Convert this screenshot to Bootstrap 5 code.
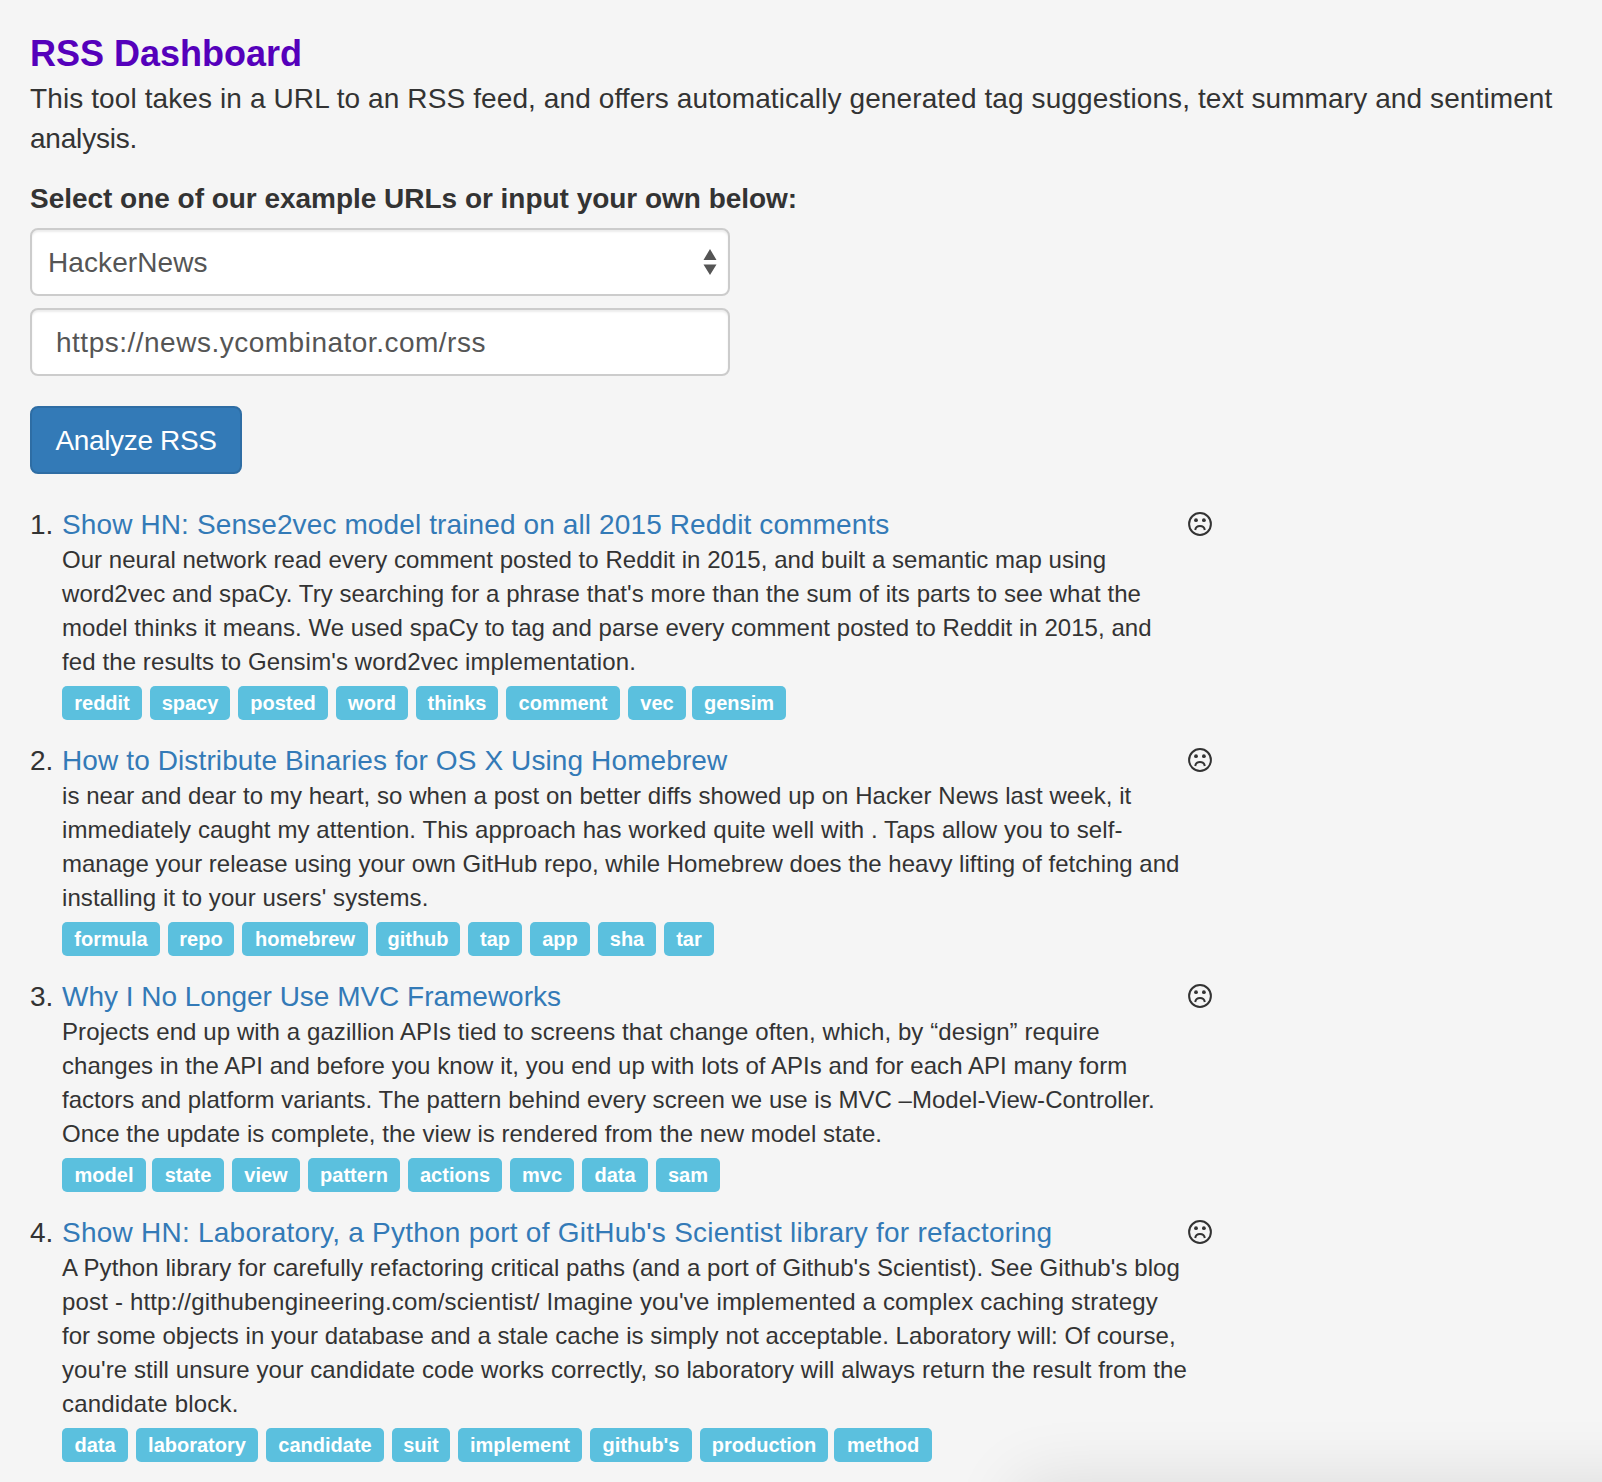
<!DOCTYPE html>
<html lang="en">
<head>
<meta charset="utf-8">
<meta name="viewport" content="width=device-width, initial-scale=1">
<title>RSS Dashboard</title>
<link href="https://cdn.jsdelivr.net/npm/bootstrap@5.3.0/dist/css/bootstrap.min.css" rel="stylesheet">
<style>
  body { background: #f5f5f5; color: #333; font: 28px/40px "Liberation Sans", Arial, sans-serif; min-height: 1482px; }
  .page { padding: 34px 30px 0; }
  .brand-title { color: #50b; font-size: 36px; line-height: 40px; font-weight: 700; margin: 0 0 5px; }
  .ln { display: block; white-space: nowrap; width: max-content; }
  .intro { letter-spacing: .107px; margin-bottom: 20px; }
  .intro .ln + .ln { letter-spacing: -.2px; }
  .form-area { width: 700px; }
  .form-area .field-label { display: block; letter-spacing: -.025px; margin-bottom: 9px; }
  .form-area .form-select, .form-area .form-control { height: 68px; border: 2px solid #ccc; border-radius: 8px; font-size: 28px; line-height: 40px; color: #555; box-shadow: inset 0 2px 2px rgba(0,0,0,.075); background-color: #fff; }
  .form-area .form-select { padding: 13px 16px 11px; letter-spacing: .1px; background-image: url("data:image/svg+xml,%3Csvg xmlns='http://www.w3.org/2000/svg' viewBox='0 0 14 26'%3E%3Cpath fill='%23555' d='M7 0l6.500 11H.5zM7 26l6.500-10.500H.5z'/%3E%3C/svg%3E"); background-size: 14px 26px; background-position: right 11px center; }
  .form-area .form-control { padding: 13px 24px 11px; margin-top: 12px; letter-spacing: .5px; }
  .btn-analyze { --bs-btn-bg: #337ab7; --bs-btn-color: #fff; --bs-btn-border-color: #2e6da4; height: 68px; width: 212px; padding: 2px 0 0; margin-top: 30px; border-width: 2px; border-radius: 8px; font-size: 28px; letter-spacing: -.35px; }
  .feed { width: 1182px; margin: 30px 0 0; }
  .feed-item { line-height: 42px; }
  .feed-item + .feed-item { margin-top: 20px; }
  .feed-num { width: 32px; }
  .feed-link { color: #337ab7; text-decoration: none; height: 39px; }
  .feed-text { font-size: 24px; line-height: 34px; margin-bottom: 7px; }
  .tag { background: #5bc0de; color: #fff; font-size: 20px; line-height: 20px; font-weight: 700; height: 34px; padding: 7px 0; border-radius: 5px; text-align: center; }
  .tag-tight { margin-left: -2px; }
  .mood { width: 24px; height: 24px; margin-top: 8px; }
  .shade-clip { width: 702px; height: 100px; }
  .shade-box { margin: 100px 0 0 118px; width: 900px; height: 300px; box-shadow: 0 0 65px rgba(0,0,0,.11); }
</style>
<script src="https://cdn.jsdelivr.net/npm/bootstrap@5.3.0/dist/js/bootstrap.bundle.min.js"></script>
</head>
<body class="position-relative">
<svg class="d-none"><symbol id="sad" viewBox="0 0 24 24"><circle cx="12" cy="12" r="10.900" fill="none" stroke="#333" stroke-width="2"/><circle cx="8" cy="8.200" r="1.900" fill="#333"/><circle cx="15.900" cy="8.200" r="1.900" fill="#333"/><path d="M7.200 18C8 12.800 16 12.800 16.800 18" fill="none" stroke="#333" stroke-width="2"/></symbol></svg>
<main class="page">
  <h1 class="brand-title">RSS Dashboard</h1>
  <p class="intro"><span class="ln">This tool takes in a URL to an RSS feed, and offers automatically generated tag suggestions, text summary and sentiment</span><span class="ln">analysis.</span></p>
  <form class="form-area">
    <label class="field-label fw-bold text-nowrap" for="source">Select one of our example URLs or input your own below:</label>
    <select class="form-select" id="source"><option>HackerNews</option></select>
    <input class="form-control" value="https://news.ycombinator.com/rss">
    <button type="button" class="btn btn-analyze d-block">Analyze RSS</button>
  </form>
  <ol class="feed list-unstyled" id="feed"></ol>
</main>
<div class="shade-clip position-absolute bottom-0 end-0 overflow-hidden pe-none"><div class="shade-box"></div></div>
<script>
// Each line is [text, tracking in px]; each tag is [text, width in px, tight gap]
const items = [
  { title: ["Show HN: Sense2vec model trained on all 2015 Reddit comments", .12],
    lines: [["Our neural network read every comment posted to Reddit in 2015, and built a semantic map using", .038],
      ["word2vec and spaCy. Try searching for a phrase that's more than the sum of its parts to see what the", .077],
      ["model thinks it means. We used spaCy to tag and parse every comment posted to Reddit in 2015, and", .042],
      ["fed the results to Gensim's word2vec implementation.", .098]],
    tags: [["reddit", 80], ["spacy", 80], ["posted", 90], ["word", 72], ["thinks", 82], ["comment", 114], ["vec", 58], ["gensim", 94, 1]] },
  { title: ["How to Distribute Binaries for OS X Using Homebrew", .112],
    lines: [["is near and dear to my heart, so when a post on better diffs showed up on Hacker News last week, it", .052],
      ["immediately caught my attention. This approach has worked quite well with . Taps allow you to self-", .103],
      ["manage your release using your own GitHub repo, while Homebrew does the heavy lifting of fetching and", .008],
      ["installing it to your users' systems.", .083]],
    tags: [["formula", 98], ["repo", 66], ["homebrew", 126], ["github", 84], ["tap", 54], ["app", 60], ["sha", 58], ["tar", 50]] },
  { title: ["Why I No Longer Use MVC Frameworks", -.015],
    lines: [["Projects end up with a gazillion APIs tied to screens that change often, which, by “design” require", .093],
      ["changes in the API and before you know it, you end up with lots of APIs and for each API many form", .047],
      ["factors and platform variants. The pattern behind every screen we use is MVC –Model-View-Controller.", .025],
      ["Once the update is complete, the view is rendered from the new model state.", .048]],
    tags: [["model", 84], ["state", 72, 1], ["view", 68], ["pattern", 92], ["actions", 94], ["mvc", 64], ["data", 66], ["sam", 64]] },
  { title: ["Show HN: Laboratory, a Python port of GitHub's Scientist library for refactoring", .239],
    lines: [["A Python library for carefully refactoring critical paths (and a port of Github's Scientist). See Github's blog", .074],
      ["post - http://githubengineering.com/scientist/ Imagine you've implemented a complex caching strategy", .174],
      ["for some objects in your database and a stale cache is simply not acceptable. Laboratory will: Of course,", .049],
      ["you're still unsure your candidate code works correctly, so laboratory will always return the result from the", .089],
      ["candidate block.", .19]],
    tags: [["data", 66], ["laboratory", 122], ["candidate", 118], ["suit", 58], ["implement", 124], ["github's", 102], ["production", 128], ["method", 98, 1]] }
];
const line = ([text, tracking]) => `<span class="ln" style="letter-spacing:${tracking}px">${text}</span>`;
const tag = ([text, width, tight]) => `<span class="tag${tight ? ' tag-tight' : ''}" style="width:${width}px">${text}</span>`;
document.getElementById('feed').innerHTML = items.map((item, i) => `
  <li class="feed-item d-flex">
    <span class="feed-num flex-shrink-0">${i + 1}.</span>
    <div class="flex-grow-1">
      <a class="feed-link d-block" href="#">${line(item.title)}</a>
      <div class="feed-text">${item.lines.map(line).join('')}</div>
      <div class="d-flex gap-2">${item.tags.map(tag).join('')}</div>
    </div>
    <svg class="mood flex-shrink-0"><use href="#sad"/></svg>
  </li>`).join('');
</script>
</body>
</html>
